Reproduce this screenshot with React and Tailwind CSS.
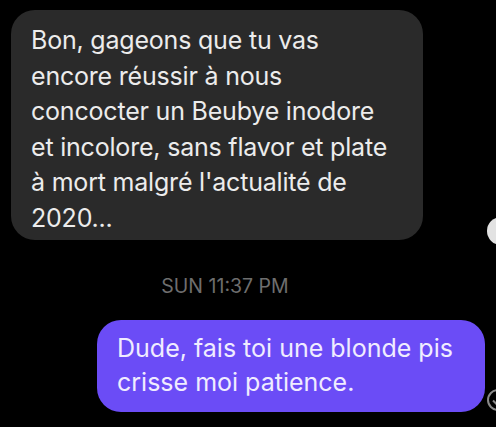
export default function App() {
  return (
    <div
      className="w-[496px] h-[427px] bg-black overflow-hidden relative"
      style={{ fontFamily: "Inter, 'Noto Sans', sans-serif" }}
    >
      <div className="pt-[10px] pl-[11px]">
        <div className="w-[412px] h-[230px] bg-[#2a2a2a] rounded-[24px] pl-[20px] pt-[13px] text-[25px] leading-[35.5px] text-[#ececec] tracking-[-0.2px]">
          Bon, gageons que tu vas
          <br />
          encore réussir à nous
          <br />
          concocter un Beubye inodore
          <br />
          et incolore, sans flavor et plate
          <br />
          à mort malgré l'actualité de
          <br />
          2020...
        </div>
      </div>

      <div className="text-center text-[19.5px] leading-[24px] text-[#6e6e6e] mt-[34px] w-[450px]">
        SUN 11:37 PM
      </div>

      <div className="flex justify-end pr-[11px] mt-[22px]">
        <div className="w-[388px] h-[92px] bg-[#6b4cf6] rounded-[24px] pl-[20px] pt-[11px] text-[25px] leading-[34px] text-[#f0ecff]">
          Dude, fais toi une blonde pis
          <br />
          crisse moi patience.
        </div>
      </div>

      <div className="absolute left-[487px] top-[217px] w-[28px] h-[28px] rounded-full bg-[#e2e2e2]" />
      <svg className="absolute left-[486px] top-[388px]" width="24" height="24" viewBox="0 0 24 24">
        <circle cx="12" cy="12" r="10" fill="none" stroke="#8a8a8a" strokeWidth="2" />
        <path d="M7 12.5l3 3 6-6" fill="none" stroke="#8a8a8a" strokeWidth="2" />
      </svg>
    </div>
  );
}
